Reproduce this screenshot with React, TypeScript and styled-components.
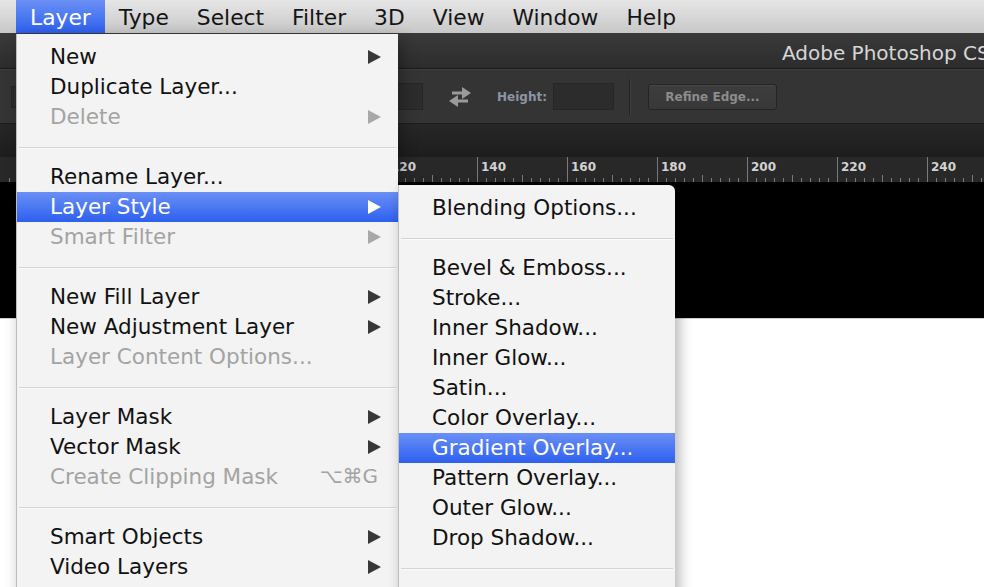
import React from 'react';
import styled, { createGlobalStyle, css } from 'styled-components';

const GlobalStyle = createGlobalStyle`
  html, body { margin: 0; padding: 0; background: #fff; }
  body { font-family: "DejaVu Sans", "Liberation Sans", sans-serif; }
`;

const Screen = styled.div`
  position: relative;
  width: 984px;
  height: 587px;
  overflow: hidden;
  display: flex;
  flex-direction: column;
  font-family: "DejaVu Sans", "Liberation Sans", sans-serif;
  background: #fff;
`;

const MenuBar = styled.div`
  flex: none;
  height: 33px;
  display: flex;
  align-items: stretch;
  padding-left: 16px;
  background: linear-gradient(#e6e6e6, #c8c8c8);
  border-bottom: 1px solid #3a3a3a;
`;

const MenuBarItem = styled.div<{ $active?: boolean }>`
  display: flex;
  align-items: center;
  padding: 1px 14px 0;
  font-size: 21.8px;
  color: #151515;
  ${(p) =>
    p.$active &&
    css`
      background: linear-gradient(#6b90f5, #2d60ef);
      color: #fff;
    `}
`;

const TitleBar = styled.div`
  flex: none;
  height: 35px;
  box-sizing: border-box;
  display: flex;
  align-items: center;
  padding: 3px 0 0 782px;
  background: linear-gradient(#3a3a3a, #2c2c2c);
  border-bottom: 1px solid #1a1a1a;
  white-space: nowrap;
`;

const TitleText = styled.span`
  font-size: 20px;
  color: #d6d6d6;
`;

const OptionsBar = styled.div`
  flex: none;
  height: 53px;
  display: flex;
  align-items: center;
  background: #343434;
  border-top: 1px solid #3e3e3e;
  border-bottom: 1px solid #1c1c1c;
`;

const Field = styled.div<{ $w: number; $h: number; $ml: number }>`
  flex: none;
  width: ${(p) => p.$w}px;
  height: ${(p) => p.$h}px;
  margin-left: ${(p) => p.$ml}px;
  background: #2c2c2c;
  border: 1px solid #262626;
  box-sizing: border-box;
`;

const SwapIcon = styled.svg`
  flex: none;
  margin-left: 25px;
`;

const FieldLabel = styled.span`
  margin-left: 25px;
  font-size: 12px;
  font-weight: bold;
  color: #8d95a3;
`;

const Divider = styled.div`
  flex: none;
  width: 1px;
  height: 36px;
  margin-left: 15px;
  background: #222;
  box-shadow: 1px 0 0 #3f3f3f;
`;

const Button = styled.div`
  flex: none;
  margin-left: 18px;
  width: 129px;
  height: 26px;
  box-sizing: border-box;
  display: flex;
  align-items: center;
  justify-content: center;
  border-radius: 3px;
  background: linear-gradient(#3d3d3d, #383838);
  border: 1px solid #242424;
  box-shadow: inset 0 1px 0 #474747;
  font-size: 12px;
  font-weight: bold;
  color: #8c8c8c;
`;

const Band = styled.div`
  flex: none;
  height: 33px;
  background: linear-gradient(#272727, #1d1d1d);
`;

const Ruler = styled.svg`
  flex: none;
  display: block;
  background: #282828;
`;

const Canvas = styled.div`
  flex: none;
  height: 136px;
  background: #000;
`;

const Paper = styled.div`
  flex: 1;
  background: #fff;
  border-top: 1px solid #d0d0d0;
`;

const Menu = styled.div<{ $left: number; $top: number; $width: number; $round?: boolean }>`
  position: absolute;
  left: ${(p) => p.$left}px;
  top: ${(p) => p.$top}px;
  width: ${(p) => p.$width}px;
  padding: 8px 0 40px;
  background: #f3f3f3;
  border-left: 1px solid #bdbdbd;
  box-sizing: border-box;
  box-shadow: 4px 4px 14px rgba(0, 0, 0, 0.3);
  border-radius: ${(p) => (p.$round ? '0 6px 0 0' : '0')};
`;

const Row = styled.div<{ $active?: boolean; $disabled?: boolean }>`
  height: 30px;
  display: flex;
  align-items: center;
  padding: 0 17px 2px 33px;
  box-sizing: border-box;
  font-size: 21.5px;
  color: ${(p) => (p.$disabled ? '#a3a3a3' : '#111')};
  white-space: nowrap;
  ${(p) =>
    p.$active &&
    css`
      background: linear-gradient(#6a8ff5, #2d60ef);
      color: #fff;
    `}
`;

const RowLabel = styled.span`
  flex: 1;
`;

const Shortcut = styled.span`
  color: #a3a3a3;
  font-size: 20px;
  margin-right: 3px;
`;

const ArrowBox = styled.svg`
  flex: none;
  margin-top: 2px;
`;

const Separator = styled.div`
  height: 30px;
  display: flex;
  align-items: center;
  padding: 0 2px;
  &::after {
    content: '';
    flex: 1;
    height: 1px;
    background: #d3d3d3;
    box-shadow: 0 1px 0 #fbfbfb;
  }
`;

const Arrow = ({ color }: { color: string }) => (
  <ArrowBox width="13" height="14" viewBox="0 0 13 14">
    <polygon points="0,0 13,7 0,14" fill={color} />
  </ArrowBox>
);

type Item =
  | { sep: true }
  | { label: string; sub?: boolean; disabled?: boolean; active?: boolean; shortcut?: string };

const mainItems: Item[] = [
  { label: 'New', sub: true },
  { label: 'Duplicate Layer...' },
  { label: 'Delete', sub: true, disabled: true },
  { sep: true },
  { label: 'Rename Layer...' },
  { label: 'Layer Style', sub: true, active: true },
  { label: 'Smart Filter', sub: true, disabled: true },
  { sep: true },
  { label: 'New Fill Layer', sub: true },
  { label: 'New Adjustment Layer', sub: true },
  { label: 'Layer Content Options...', disabled: true },
  { sep: true },
  { label: 'Layer Mask', sub: true },
  { label: 'Vector Mask', sub: true },
  { label: 'Create Clipping Mask', disabled: true, shortcut: '⌥⌘G' },
  { sep: true },
  { label: 'Smart Objects', sub: true },
  { label: 'Video Layers', sub: true },
];

const subItems: Item[] = [
  { label: 'Blending Options...' },
  { sep: true },
  { label: 'Bevel & Emboss...' },
  { label: 'Stroke...' },
  { label: 'Inner Shadow...' },
  { label: 'Inner Glow...' },
  { label: 'Satin...' },
  { label: 'Color Overlay...' },
  { label: 'Gradient Overlay...', active: true },
  { label: 'Pattern Overlay...' },
  { label: 'Outer Glow...' },
  { label: 'Drop Shadow...' },
  { sep: true },
];

const renderItems = (items: Item[]) =>
  items.map((it, i) => {
    if ('sep' in it) return <Separator key={i} />;
    const arrowColor = it.active ? '#fff' : it.disabled ? '#a8a8a8' : '#383838';
    return (
      <Row key={i} $active={it.active} $disabled={it.disabled}>
        <RowLabel>{it.label}</RowLabel>
        {it.shortcut && <Shortcut>{it.shortcut}</Shortcut>}
        {it.sub && <Arrow color={arrowColor} />}
      </Row>
    );
  });

const RulerDrawing = () => {
  const ticks: React.ReactNode[] = [];
  for (let x = 9; x < 984; x += 9) {
    const off = (((x - 27) % 90) + 90) % 90;
    if (off === 0) {
      const val = ((x - 477) / 90) * 20 + 140;
      ticks.push(<line key={`t${x}`} x1={x + 0.5} y1={0} x2={x + 0.5} y2={25} stroke="#7a7a7a" />);
      if (x > 300) {
        ticks.push(
          <text key={`l${x}`} x={x + 4} y={14} fontSize="12" fontWeight="bold" fill="#d2d2d2" fontFamily="DejaVu Sans, sans-serif">
            {val}
          </text>
        );
      }
    } else {
      const h = off === 45 ? 7 : 4;
      ticks.push(<line key={`t${x}`} x1={x + 0.5} y1={25 - h} x2={x + 0.5} y2={25} stroke="#7a7a7a" />);
    }
  }
  return (
    <Ruler width="984" height="25" viewBox="0 0 984 25">
      {ticks}
    </Ruler>
  );
};

export default function App() {
  return (
    <>
      <GlobalStyle />
      <Screen>
        <MenuBar>
          <MenuBarItem $active>Layer</MenuBarItem>
          <MenuBarItem>Type</MenuBarItem>
          <MenuBarItem>Select</MenuBarItem>
          <MenuBarItem>Filter</MenuBarItem>
          <MenuBarItem>3D</MenuBarItem>
          <MenuBarItem>View</MenuBarItem>
          <MenuBarItem>Window</MenuBarItem>
          <MenuBarItem>Help</MenuBarItem>
        </MenuBar>
        <TitleBar>
          <TitleText>Adobe Photoshop CS6</TitleText>
        </TitleBar>
        <OptionsBar>
          <Field $w={60} $h={22} $ml={11} />
          <Field $w={60} $h={27} $ml={292} />
          <SwapIcon width="24" height="22" viewBox="0 0 24 22">
            <path d="M4 7 L16 7" stroke="#9a9a9a" strokeWidth="3" />
            <polygon points="14,1 23,7 14,13" fill="#9a9a9a" />
            <path d="M20 15 L8 15" stroke="#9a9a9a" strokeWidth="3" />
            <polygon points="10,9 1,15 10,21" fill="#9a9a9a" />
          </SwapIcon>
          <FieldLabel>Height:</FieldLabel>
          <Field $w={61} $h={27} $ml={6} />
          <Divider />
          <Button>Refine Edge...</Button>
        </OptionsBar>
        <Band />
        <RulerDrawing />
        <Canvas />
        <Paper />
        <Menu $left={16} $top={34} $width={382}>
          {renderItems(mainItems)}
        </Menu>
        <Menu $left={398} $top={185} $width={277} $round>
          {renderItems(subItems)}
        </Menu>
      </Screen>
    </>
  );
}
